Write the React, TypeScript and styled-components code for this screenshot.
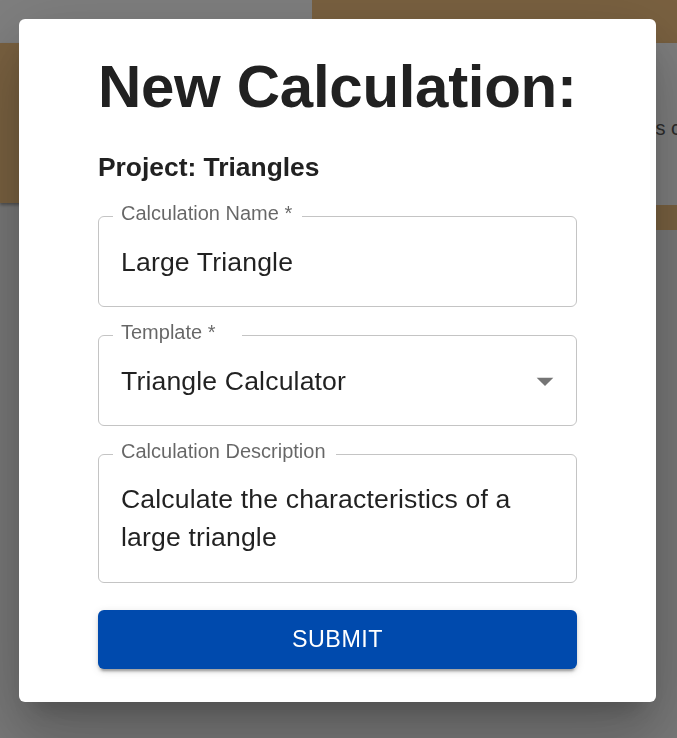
import React from "react";
import styled, { createGlobalStyle } from "styled-components";

const GlobalStyle = createGlobalStyle`
  html, body { margin: 0; padding: 0; height: 100%; }
  body {
    font-family: "Liberation Sans", Arial, Helvetica, sans-serif;
    background: #f2f2f2;
    overflow: hidden;
  }
  #root { min-height: 100vh; }
  * { box-sizing: border-box; }
`;

const Page = styled.div`
  display: grid;
  grid-template-columns: 312px 236px 12px 1fr;
  grid-template-rows: 43px 162px 25px;
  width: 100%;
`;

const AppBarLeft = styled.div`
  grid-column: 1;
  grid-row: 1;
  background: #ffffff;
`;

const AppBarRight = styled.div`
  grid-column: 2 / 5;
  grid-row: 1;
  background: #f4c382;
`;

const ProjectCard = styled.div`
  grid-column: 1 / 3;
  grid-row: 2;
  height: 160px;
  background: #f4c382;
  box-shadow: 0 2px 3px rgba(0, 0, 0, 0.35);
`;

const InfoCard = styled.div`
  grid-column: 4;
  grid-row: 2;
  background: #ffffff;
  padding: 74px 0 0 24px;
  white-space: nowrap;
  overflow: hidden;
  font-size: 20px;
  color: #5a5a5a;
  box-shadow: 0 2px 3px rgba(0, 0, 0, 0.35);
`;

const InfoStrip = styled.div`
  grid-column: 4;
  grid-row: 3;
  background: #f4c382;
`;

const Backdrop = styled.div`
  position: fixed;
  inset: 0;
  background: rgba(0, 0, 0, 0.5);
  display: flex;
  justify-content: flex-start;
  align-items: flex-start;
  padding: 19px 0 0 19px;
`;

const Dialog = styled.div`
  width: 637px;
  background: #ffffff;
  border-radius: 6px;
  padding: 32px 79px 33px;
  box-shadow: 0px 18px 25px -12px rgba(0, 0, 0, 0.2),
    0px 40px 63px 5px rgba(0, 0, 0, 0.14),
    0px 15px 76px 13px rgba(0, 0, 0, 0.12);
  display: flex;
  flex-direction: column;
`;

const Title = styled.h2`
  margin: 0;
  font-size: 60px;
  line-height: 72px;
  font-weight: 700;
  letter-spacing: -0.3px;
  color: #212121;
  white-space: nowrap;
`;

const Subtitle = styled.h6`
  margin: 23px 0 0;
  font-size: 26.4px;
  line-height: 42px;
  font-weight: 700;
  color: #212121;
`;

const Form = styled.form`
  margin-top: 15px;
  display: flex;
  flex-direction: column;
  gap: 15px;
`;

const Fieldset = styled.fieldset`
  margin: 0;
  min-width: 0;
  border: 1px solid #c4c4c4;
  border-radius: 6px;
  padding: 0 11px 0 22px;
`;

const Legend = styled.legend<{ $extra?: number }>`
  margin-left: -8px;
  padding: 0 ${(p) => 10 + (p.$extra ?? 0)}px 6px 8px;
  font-size: 20px;
  line-height: 20px;
  color: rgba(0, 0, 0, 0.6);
  white-space: nowrap;
`;

const ValueRow = styled.div<{ $lines?: number }>`
  display: flex;
  align-items: ${(p) => ((p.$lines ?? 1) > 1 ? "flex-start" : "center")};
  padding: ${(p) => ((p.$lines ?? 1) > 1 ? "13px 0 26px" : "14px 0 25px")};
`;

const ValueText = styled.div`
  flex: 1;
  font-size: 26.6px;
  line-height: 38px;
  letter-spacing: 0.15px;
  color: rgba(0, 0, 0, 0.87);
  padding-right: 12px;
`;

const ArrowIcon = styled.svg`
  width: 40px;
  height: 40px;
  margin: -2px 0 -2px;
  flex: none;
  fill: rgba(0, 0, 0, 0.54);
`;

const SubmitButton = styled.button`
  margin-top: 12px;
  height: 59px;
  border: none;
  border-radius: 6px;
  background: #004aad;
  color: #ffffff;
  font-family: "Liberation Sans", Arial, Helvetica, sans-serif;
  font-size: 23.3px;
  letter-spacing: 0.5px;
  text-transform: uppercase;
  box-shadow: 0px 5px 2px -3px rgba(0, 0, 0, 0.2),
    0px 3px 3px 0px rgba(0, 0, 0, 0.14),
    0px 2px 8px 0px rgba(0, 0, 0, 0.12);
  cursor: pointer;
`;

type FieldProps = {
  label: string;
  value: string;
  lines?: number;
  select?: boolean;
  notchExtra?: number;
};

function OutlinedField({ label, value, lines, select, notchExtra }: FieldProps) {
  return (
    <Fieldset>
      <Legend $extra={notchExtra}>{label}</Legend>
      <ValueRow $lines={lines}>
        <ValueText>{value}</ValueText>
        {select && (
          <ArrowIcon viewBox="0 0 24 24" aria-hidden="true">
            <path d="M7 10l5 5 5-5z" />
          </ArrowIcon>
        )}
      </ValueRow>
    </Fieldset>
  );
}

export default function App() {
  return (
    <>
      <GlobalStyle />
      <Page>
        <AppBarLeft />
        <AppBarRight />
        <ProjectCard />
        <InfoCard>Triangles calculations</InfoCard>
        <InfoStrip />
      </Page>
      <Backdrop>
        <Dialog role="dialog">
          <Title>New Calculation:</Title>
          <Subtitle>Project: Triangles</Subtitle>
          <Form onSubmit={(e) => e.preventDefault()}>
            <OutlinedField label="Calculation Name *" value="Large Triangle" />
            <OutlinedField
              label="Template *"
              value="Triangle Calculator"
              select
              notchExtra={16}
            />
            <OutlinedField
              label="Calculation Description"
              value="Calculate the characteristics of a large triangle"
              lines={2}
            />
            <SubmitButton type="submit">Submit</SubmitButton>
          </Form>
        </Dialog>
      </Backdrop>
    </>
  );
}
